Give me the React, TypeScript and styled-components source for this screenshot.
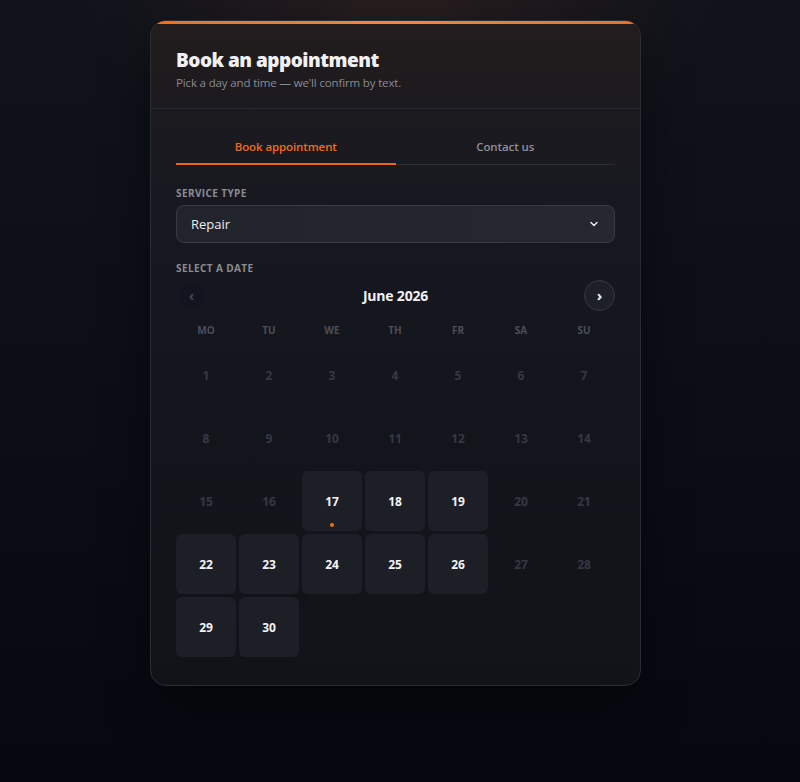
import styled, { createGlobalStyle } from "styled-components";

const GlobalStyle = createGlobalStyle`
  html, body {
    margin: 0;
    padding: 0;
    background: #080b13;
  }
  body {
    font-family: "Open Sans", "Noto Sans", sans-serif;
    color: #e8e8ec;
  }
`;

const WEEKDAYS = ["MO", "TU", "WE", "TH", "FR", "SA", "SU"];
const OPEN_DAYS = [17, 18, 19, 22, 23, 24, 25, 26, 29, 30];
const TODAY = 17;

const App = () => {
  const days = Array.from({ length: 30 }, (_, i) => i + 1);

  return (
    <Page>
      <GlobalStyle />
      <Card>
        <Header>
          <Title>Book an appointment</Title>
          <Subtitle>Pick a day and time — we'll confirm by text.</Subtitle>
        </Header>
        <Body>
          <Tabs>
            <Tab $active>Book appointment</Tab>
            <Tab>Contact us</Tab>
          </Tabs>

          <Label>Service type</Label>
          <Select>
            <span>Repair</span>
            <svg width="12" height="12" viewBox="0 0 24 24" fill="none">
              <path
                d="M6 9l6 6 6-6"
                stroke="#e6e6ea"
                strokeWidth="3"
                strokeLinecap="round"
                strokeLinejoin="round"
              />
            </svg>
          </Select>

          <Label $top={18}>Select a date</Label>
          <MonthBar>
            <NavButton $disabled>‹</NavButton>
            <MonthTitle>June 2026</MonthTitle>
            <NavButton>›</NavButton>
          </MonthBar>

          <Grid>
            {WEEKDAYS.map((d) => (
              <Weekday key={d}>{d}</Weekday>
            ))}
            {days.map((d) => {
              const open = OPEN_DAYS.includes(d);
              return (
                <Day key={d} $open={open}>
                  {d}
                  {d === TODAY && <TodayDot />}
                </Day>
              );
            })}
          </Grid>
        </Body>
      </Card>
    </Page>
  );
};

export default App;

const Page = styled.div`
  min-height: 782px;
  box-sizing: border-box;
  padding: 20px 9px 0 0;
  display: flex;
  justify-content: center;
  align-items: flex-start;
  background:
    radial-gradient(ellipse 420px 260px at 50% 0%, rgba(60, 38, 32, 0.55), transparent 75%),
    linear-gradient(180deg, #10131b 0%, #0a0d16 60%, #060810 100%);
`;

const Card = styled.div`
  position: relative;
  width: 491px;
  box-sizing: border-box;
  border: 1px solid #2b2d35;
  border-radius: 16px;
  overflow: hidden;
  background: linear-gradient(180deg, #1f1b1d 0%, #181920 25%, #13151c 60%, #111319 100%);
  box-shadow: 0 20px 50px rgba(0, 0, 0, 0.45);

  &::before {
    content: "";
    position: absolute;
    top: 0;
    left: 0;
    right: 0;
    height: 3px;
    background: linear-gradient(90deg, #f0701e, #f58a2a 50%, #f0701e);
  }
`;

const Header = styled.div`
  padding: 26px 25px 17px;
  border-bottom: 1px solid #2c2d34;
  background: linear-gradient(180deg, rgba(40, 30, 30, 0.35), rgba(30, 27, 30, 0.1));
`;

const Title = styled.h1`
  margin: 0;
  font-size: 19px;
  font-weight: 800;
  letter-spacing: -0.5px;
  color: #f1f1f3;
  line-height: 26px;
`;

const Subtitle = styled.p`
  margin: 1px 0 0;
  font-size: 11.5px;
  letter-spacing: -0.15px;
  color: #8c8b93;
  line-height: 17px;
`;

const Body = styled.div`
  padding: 24px 25px 28px;
`;

const Tabs = styled.div`
  display: grid;
  grid-template-columns: 1fr 1fr;
  border-bottom: 1px solid #2d2f37;
`;

const Tab = styled.div<{ $active?: boolean }>`
  text-align: center;
  font-size: 11.5px;
  font-weight: 600;
  letter-spacing: -0.1px;
  padding: 6px 0 9px;
  margin-bottom: -1px;
  color: ${(p) => (p.$active ? "#f26b1d" : "#8f8f97")};
  border-bottom: 2px solid ${(p) => (p.$active ? "#f0651c" : "transparent")};
`;

const Label = styled.div<{ $top?: number }>`
  margin-top: ${(p) => p.$top ?? 21}px;
  margin-bottom: 5px;
  font-size: 10px;
  line-height: 14px;
  font-weight: 700;
  letter-spacing: 0.4px;
  text-transform: uppercase;
  color: #8b8c94;
`;

const Select = styled.div`
  height: 38px;
  box-sizing: border-box;
  display: flex;
  align-items: center;
  justify-content: space-between;
  padding: 0 14px;
  border: 1px solid #393b44;
  border-radius: 8px;
  background: linear-gradient(90deg, #22242b, #26282f);
  font-size: 13px;
  color: #ececf0;
`;

const MonthBar = styled.div`
  display: flex;
  align-items: center;
  justify-content: space-between;
`;

const NavButton = styled.div<{ $disabled?: boolean }>`
  width: 31px;
  height: 31px;
  box-sizing: border-box;
  border-radius: 50%;
  display: flex;
  align-items: center;
  justify-content: center;
  font-size: 15px;
  font-weight: 700;
  padding-bottom: 2px;
  border: 1px solid ${(p) => (p.$disabled ? "#161922" : "#363943")};
  background: ${(p) => (p.$disabled ? "#121520" : "#1e2029")};
  color: ${(p) => (p.$disabled ? "#3f4350" : "#f1f1f4")};
`;

const MonthTitle = styled.div`
  font-size: 14px;
  font-weight: 700;
  letter-spacing: -0.2px;
  color: #f0f0f3;
`;

/* first row holds the weekday names, the rest are 60px day cells */
const Grid = styled.div`
  display: grid;
  grid-template-columns: repeat(7, 60px);
  grid-template-rows: 19px;
  grid-auto-rows: 60px;
  gap: 3px;
  margin-top: 12px;
`;

const Weekday = styled.div`
  align-self: start;
  font-size: 10px;
  font-weight: 700;
  text-align: center;
  color: #4b4e59;
  line-height: 14px;
`;

const Day = styled.div<{ $open: boolean }>`
  position: relative;
  display: flex;
  align-items: center;
  justify-content: center;
  border-radius: 6px;
  font-size: 12px;
  font-weight: 700;
  color: ${(p) => (p.$open ? "#f3f3f5" : "#353844")};
  background: ${(p) => (p.$open ? "#1d1f26" : "transparent")};
`;

const TodayDot = styled.span`
  position: absolute;
  bottom: 4px;
  left: 50%;
  width: 4px;
  height: 4px;
  margin-left: -2px;
  border-radius: 50%;
  background: #f06d1e;
`;
